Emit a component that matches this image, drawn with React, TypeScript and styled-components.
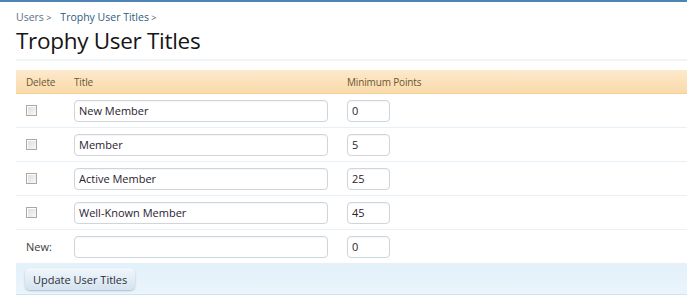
import React from 'react';
import styled, { createGlobalStyle } from 'styled-components';

const GlobalStyle = createGlobalStyle`
  html, body {
    margin: 0;
    padding: 0;
    background: #fff;
  }
  body {
    font-family: 'Open Sans', 'Liberation Sans', sans-serif;
    color: #222;
  }
`;

const Page = styled.div`
  border-top: 2px solid #4f83b3;
  padding: 9px 0 0 16px;
  overflow: hidden;
`;

const Breadcrumb = styled.div`
  display: flex;
  gap: 9px;
  font-size: 10.5px;
  line-height: 13px;
  color: #5a7187;
`;

const Crumb = styled.span<{ $link?: boolean }>`
  color: ${({ $link }) => ($link ? '#2f5c80' : '#5a7187')};

  &::after {
    content: ' >';
    font-size: 9px;
    color: #555;
  }
`;

const Title = styled.h1`
  margin: 2px 0 0;
  font-size: 22.5px;
  font-weight: 400;
  line-height: 30px;
  color: #151515;
  letter-spacing: -0.3px;
`;

const Divider = styled.div`
  height: 0;
  margin-top: 3px;
  border-bottom: 2px solid #eef4f8;
`;

const Table = styled.form`
  margin-top: 9px;
`;

const HeaderRow = styled.div`
  display: grid;
  grid-template-columns: 58px 273px 1fr;
  align-items: center;
  height: 23px;
  background: linear-gradient(to bottom, #fde9cc, #f9daab);
  border-bottom: 1px solid #f6cf94;
  font-size: 10px;
  letter-spacing: -0.15px;
  color: #6b5630;

  & > span:first-child {
    padding-left: 10px;
  }
`;

const Row = styled.div`
  display: grid;
  grid-template-columns: 58px 273px 1fr;
  align-items: center;
  height: 33px;
  border-bottom: 1px solid #e6f0f6;
  font-size: 11px;
  color: #333;

  & > :first-child {
    margin-left: 10px;
  }
`;

const Check = styled.input.attrs({ type: 'checkbox' })`
  display: block;
  width: 11px;
  height: 11px;
  margin: 0;
  appearance: none;
  border: 1px solid #a9a9a9;
  background: linear-gradient(135deg, #dcdcdc, #f8f8f8);
  box-shadow: inset 1px 1px 0 #fff;
`;

const Label = styled.span`
  font-size: 11px;
  color: #3a3a3a;
`;

const TextBox = styled.input<{ $w: number }>`
  box-sizing: border-box;
  width: ${({ $w }) => $w}px;
  height: 22px;
  padding: 0 4px;
  border: 1px solid #cfd5da;
  border-radius: 4px;
  background: #fff;
  font-family: 'Open Sans', 'Liberation Sans', sans-serif;
  font-size: 11px;
  color: #2a2230;
  outline: none;
  box-shadow: inset 0 1px 1px rgba(0, 0, 0, 0.04);
`;

const Footer = styled.div`
  display: flex;
  align-items: center;
  height: 30px;
  padding-left: 9px;
  background: linear-gradient(to bottom, #e3f1fb, #eaf4fb);
  border-bottom: 1px solid #cfe3f1;
`;

const Button = styled.button`
  height: 22px;
  padding: 0 8px;
  border: none;
  border-radius: 5px;
  background: linear-gradient(to bottom, #f2f7fb, #d4e3ef);
  box-shadow: 0 1px 2px rgba(90, 120, 150, 0.45);
  font-family: 'Open Sans', 'Liberation Sans', sans-serif;
  font-size: 11px;
  color: #2d2d3d;
  cursor: pointer;
`;

const titles = [
  { title: 'New Member', points: 0 },
  { title: 'Member', points: 5 },
  { title: 'Active Member', points: 25 },
  { title: 'Well-Known Member', points: 45 },
];

export default function App() {
  return (
    <>
      <GlobalStyle />
      <Page>
        <Breadcrumb>
          <Crumb>Users</Crumb>
          <Crumb $link>Trophy User Titles</Crumb>
        </Breadcrumb>
        <Title>Trophy User Titles</Title>
        <Divider />
        <Table onSubmit={(e) => e.preventDefault()}>
          <HeaderRow>
            <span>Delete</span>
            <span>Title</span>
            <span>Minimum Points</span>
          </HeaderRow>
          {titles.map((t) => (
            <Row key={t.title}>
              <span>
                <Check />
              </span>
              <TextBox $w={254} defaultValue={t.title} />
              <TextBox $w={43} defaultValue={String(t.points)} />
            </Row>
          ))}
          <Row>
            <Label>New:</Label>
            <TextBox $w={254} defaultValue="" />
            <TextBox $w={43} defaultValue="0" />
          </Row>
          <Footer>
            <Button type="submit">Update User Titles</Button>
          </Footer>
        </Table>
      </Page>
    </>
  );
}
